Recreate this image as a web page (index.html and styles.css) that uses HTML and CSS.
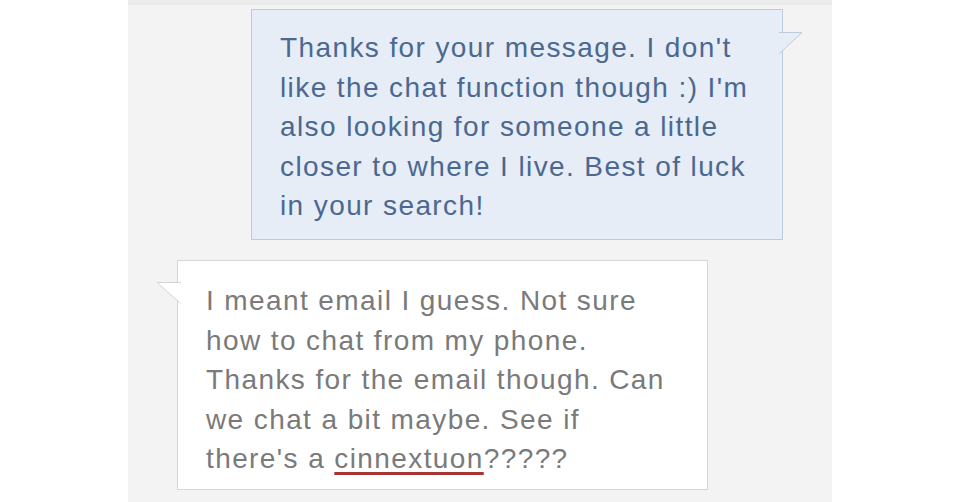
FILE: index.html
```html
<!DOCTYPE html>
<html lang="en">
<head>
  <meta charset="UTF-8">
  <meta name="viewport" content="width=device-width, initial-scale=1.0">
  <title>Messages</title>
  <link rel="stylesheet" href="styles.css">
</head>
<body>
  <div class="thread">
    <div class="bubble sent">
      <p>Thanks for your message. I don't<br>
      like the chat function though :) I'm<br>
      also looking for someone a little<br>
      closer to where I live. Best of luck<br>
      in your search!</p>
      <svg class="tail tail-right" width="26" height="26" viewBox="0 0 26 26">
        <polygon points="0,0 23,0 0,21" />
        <polyline points="0,0.5 23,0.5 0.5,21.5" />
      </svg>
    </div>

    <div class="bubble received">
      <p>I meant email I guess. Not sure<br>
      how to chat from my phone.<br>
      Thanks for the email though. Can<br>
      we chat a bit maybe. See if<br>
      there's a <span class="typo">cinnextuon</span>?????</p>
      <svg class="tail tail-left" width="26" height="26" viewBox="0 0 26 26">
        <polygon points="26,0 2,0 26,21" />
        <polyline points="26,0.5 2,0.5 25.5,21.5" />
      </svg>
    </div>
  </div>
</body>
</html>
```

FILE: styles.css
```css
body {
  margin: 0;
  background-color: #ffffff;
  font-family: 'Liberation Sans', Arial, Helvetica, sans-serif;
}

.thread {
  width: 704px;
  height: 502px;
  margin: 0 auto;
  box-sizing: border-box;
  background-color: #f3f3f3;
  border-top: 5px solid #ebebeb;
  padding-top: 4px;
  display: flex;
  flex-direction: column;
}

.bubble {
  position: relative;
  box-sizing: border-box;
  border: 1px solid;
}

.bubble p {
  margin: 0;
  font-size: 28px;
  line-height: 39.5px;
  white-space: nowrap;
}

.sent {
  margin-left: 123px;
  width: 532px;
  height: 231px;
  padding: 18px 10px 0 28px;
  background-color: #e6edf6;
  border-color: #bccbe0;
}

.sent p {
  color: #4b6891;
  letter-spacing: 1.4px;
}

.received {
  margin-top: 20px;
  margin-left: 49px;
  width: 531px;
  height: 230px;
  padding: 20px 10px 0 28px;
  background-color: #ffffff;
  border-color: #d6d6d6;
}

.received p {
  color: #7a7a7a;
  letter-spacing: 1.4px;
}

.typo {
  text-decoration: underline;
  text-decoration-color: #a83434;
  text-decoration-thickness: 3px;
  text-underline-offset: 4px;
}

.tail {
  position: absolute;
  overflow: visible;
}

.tail polyline {
  fill: none;
  stroke-width: 1;
}

.tail-right {
  right: -23px;
  top: 22px;
}

.tail-right polygon {
  fill: #e6edf6;
}

.tail-right polyline {
  stroke: #bccbe0;
}

.tail-left {
  left: -23px;
  top: 21px;
}

.tail-left polygon {
  fill: #ffffff;
}

.tail-left polyline {
  stroke: #d6d6d6;
}
```
